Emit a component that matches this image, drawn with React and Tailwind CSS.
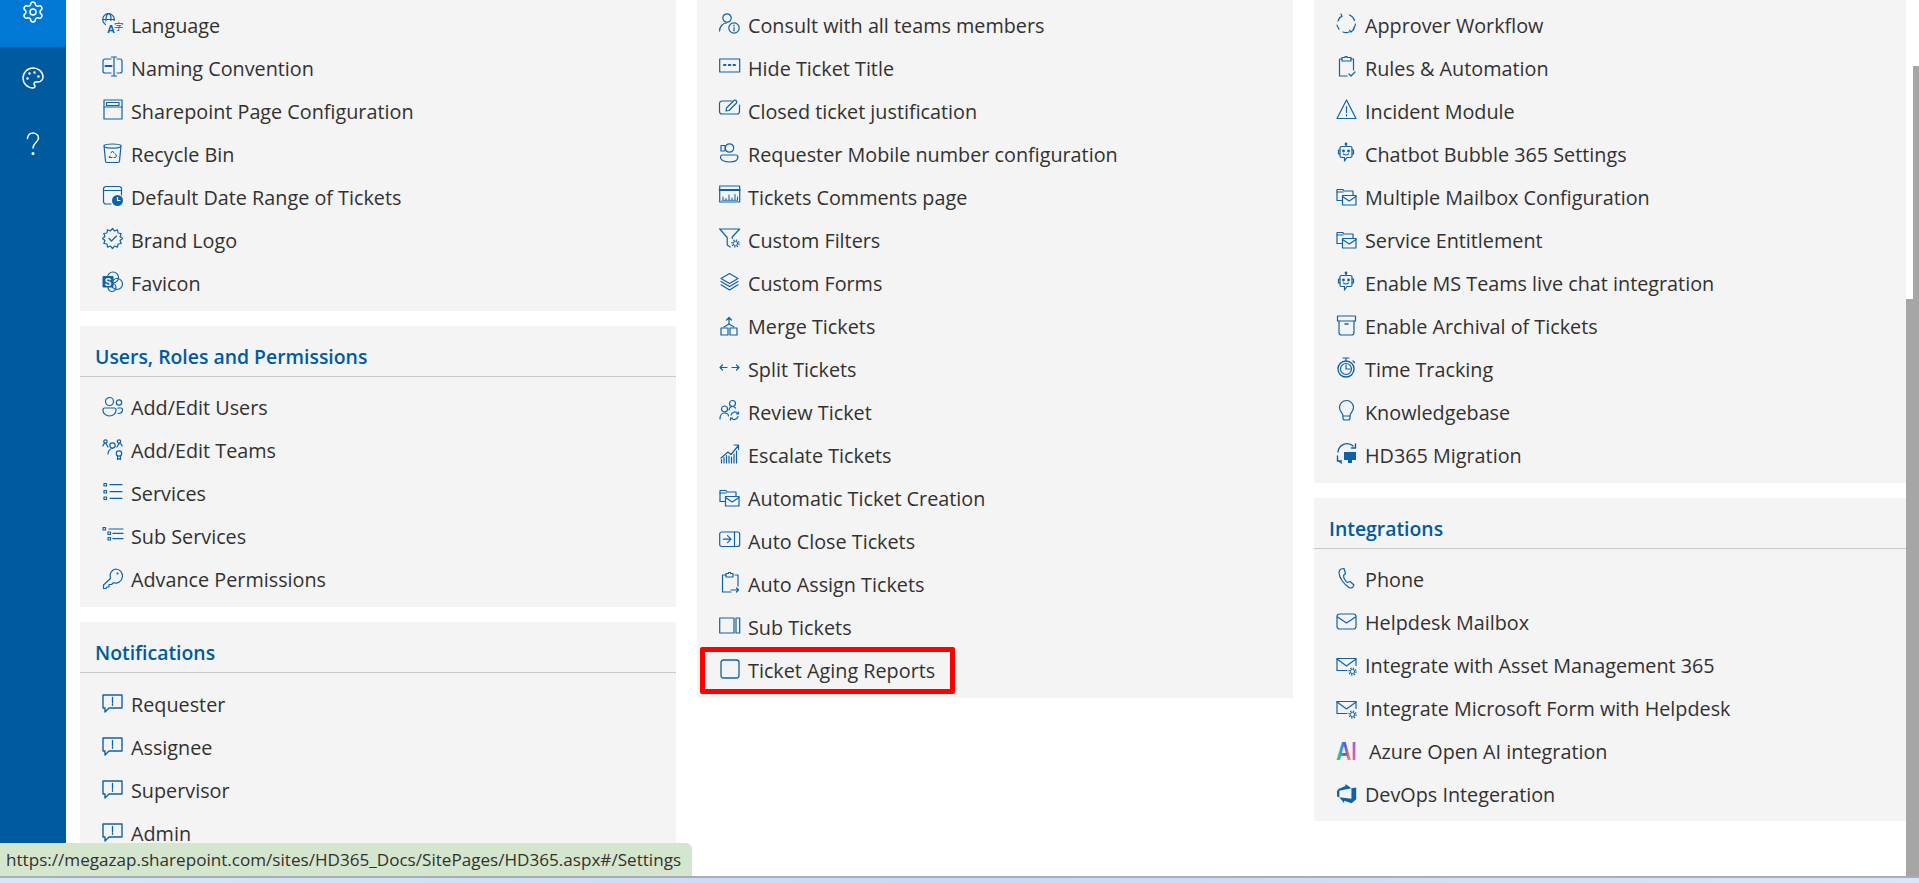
import React from 'react';
import { Settings, Palette } from 'lucide-react';

const fontStack = 'font-["Open_Sans","Noto_Sans",sans-serif]';

// scalloped badge outline, 12 bumps around the centre
const badgeOutline = Array.from({ length: 24 }, (_, i) => {
  const r = i % 2 === 0 ? 10 : 7.8;
  const a = (i * Math.PI) / 12;
  return `${(10.5 + r * Math.sin(a)).toFixed(2)} ${(10.5 - r * Math.cos(a)).toFixed(2)}`;
}).join(' L');

const smallGear = (cx, cy) => (
  <>
    <circle cx={cx} cy={cy} r="2.200" strokeWidth="1" />
    <circle cx={cx} cy={cy} r="3.500" strokeDasharray="1.300 1.450" strokeWidth="1.300" strokeLinecap="butt" />
  </>
);

const mailFolder = (
  <>
    <path d="M1 13V2.500h6l1 1.500h9v4" />
    <path d="M1 5h6" />
    <path d="M1 13.500h5" />
    <rect x="6.500" y="8.500" width="13.500" height="9.500" />
    <path d="M6.500 9.500l6.700 4.500 6.800-4.500" />
  </>
);

const bot = (
  <>
    <path d="M10 0.500v3" />
    <circle cx="10" cy="1" r="0.800" fill="currentColor" />
    <path d="M5.500 3.500h9a1.500 1.500 0 011.500 1.500v8a1.500 1.500 0 01-1.500 1.500H11l-2.500 3.500v-3.500H5.500A1.500 1.500 0 014 13V5a1.500 1.500 0 011.500-1.500z" />
    <path d="M4 7H2.500v4H4M16 7h1.500v4H16" />
    <circle cx="7.500" cy="8" r="0.800" fill="currentColor" />
    <circle cx="12.500" cy="8" r="0.800" fill="currentColor" />
    <path d="M7.500 11c1.500 1.200 3.500 1.200 5 0" />
  </>
);

const alertBubble = (
  <>
    <path d="M1 16V3h19v13H7l-4 4v-4z" strokeWidth="1.400" />
    <path d="M10.500 5.500v5M10.500 12v1.300" strokeWidth="1.300" />
  </>
);

const mailGear = (
  <>
    <path d="M1 13.500V2h19v7" />
    <path d="M1 2.500l9.500 7 9.500-7" />
    <path d="M1 14h10" />
    {smallGear(16.500, 15)}
  </>
);

const icons = {
  language: (
    <>
      <circle cx="6.500" cy="6.500" r="5.800" />
      <ellipse cx="6.500" cy="6.500" rx="2.500" ry="5.800" />
      <path d="M0.700 6.500h11.600" />
      <rect x="4" y="8" width="17" height="13" fill="#f4f4f4" stroke="none" />
      <text x="5" y="19.500" fontSize="11" fontWeight="600" fill="currentColor" stroke="none" fontFamily="Liberation Sans, sans-serif">A</text>
      <text x="12" y="17" fontSize="9.500" fill="currentColor" stroke="none" fontFamily="Noto Sans CJK SC, sans-serif">字</text>
    </>
  ),
  naming: (
    <>
      <path d="M9 3H3a2 2 0 00-2 2v10a2 2 0 002 2h6" />
      <path d="M15 3h3a2 2 0 012 2v10a2 2 0 01-2 2h-3" />
      <path d="M12 1v19M9.500 1h5M9.500 20h5" />
      <path d="M3.500 10h6" strokeWidth="2.200" />
    </>
  ),
  page: (
    <>
      <rect x="2" y="1" width="18" height="19" />
      <rect x="4.500" y="3.500" width="12.500" height="3" />
      <path d="M2 8h18" />
    </>
  ),
  recycle: (
    <>
      <path d="M2 3.500c2-2 15-2 17 0l-1.500 15.500a1.500 1.500 0 01-1.500 1.500H5a1.500 1.500 0 01-1.500-1.500z" />
      <path d="M2.500 5c3 1.500 13 1.500 16 0" />
      <path d="M9 11l1.500-2 1.500 2M13.500 12l1 2-1 1.500h-1.500M8 14l-1 1.500h3" strokeWidth="1" />
    </>
  ),
  dateClock: (
    <>
      <path d="M9 19H4a2.500 2.500 0 01-2.500-2.500V4A2.500 2.500 0 014 1.500h13A2.500 2.500 0 0119.500 4v6" />
      <path d="M1.500 5.500h18" />
      <circle cx="15.500" cy="15.500" r="5.500" fill="currentColor" stroke="none" />
      <path d="M15.500 12.500v3h2.500" stroke="#f4f4f4" strokeWidth="1.200" />
    </>
  ),
  badge: (
    <>
      <path d={`M${badgeOutline}Z`} />
      <path d="M7 10.500l2.500 2.500 5-5" />
    </>
  ),
  sharepoint: (
    <>
      <circle cx="11" cy="6.500" r="5.500" />
      <circle cx="15" cy="13" r="5.500" />
      <circle cx="10" cy="16.500" r="4" />
      <rect x="0.500" y="5" width="11" height="11.500" rx="1" fill="currentColor" stroke="none" />
      <text x="6" y="14.500" textAnchor="middle" fontSize="10" fontWeight="700" fill="#f4f4f4" stroke="none" fontFamily="Liberation Sans, sans-serif">S</text>
    </>
  ),
  users: (
    <>
      <circle cx="7.500" cy="5" r="4" />
      <circle cx="17" cy="6" r="2.700" />
      <path d="M1 13a1.500 1.500 0 011.500-1.500h10A1.500 1.500 0 0114 13v1c0 3-3 5.500-6.500 5.500S1 17 1 14z" />
      <path d="M16 11.500h3a1.500 1.500 0 011.500 1.500c0 2.500-1.500 4-4.500 4" />
    </>
  ),
  teams: (
    <>
      <circle cx="3.500" cy="2.500" r="1.700" />
      <circle cx="17" cy="2.500" r="1.700" />
      <circle cx="10.500" cy="6.500" r="2.700" />
      <path d="M1 7c0-1.500 1-2.500 2.500-2.500M6 8l-2-3.500M15 8l2-3.500M20 7c0-1.500-1-2.500-3-2.500" />
      <path d="M6 15c0-3 2-5.500 4.500-5.500" />
      <circle cx="17" cy="14.500" r="2.700" />
      <path d="M15.500 17v3.500l1.500-1 1.500 1V17" />
    </>
  ),
  services: (
    <>
      <rect x="2" y="1" width="2.500" height="2.500" />
      <rect x="2" y="8" width="2.500" height="2.500" />
      <rect x="2" y="14.500" width="2.500" height="2.500" />
      <path d="M8 2.200h12M8 9.200h12M8 15.800h12" />
    </>
  ),
  subServices: (
    <>
      <rect x="1" y="1" width="2.500" height="2.500" />
      <rect x="6" y="5.500" width="2.500" height="2.500" />
      <rect x="6" y="11" width="2.500" height="2.500" />
      <path d="M7 2.500h14M11 6.800h10M11 12.200h10" />
    </>
  ),
  key: (
    <>
      <path d="M13.500 1a7 7 0 11-2 13.700L9.500 16.500H7v2.500H5l-1 1.500H1.500v-3.500l7-6.500a7 7 0 015-9.500z" />
      <circle cx="15.500" cy="5.500" r="1.100" fill="currentColor" stroke="none" />
    </>
  ),
  alert: alertBubble,
  consult: (
    <>
      <circle cx="8" cy="5" r="4.200" />
      <path d="M0.500 18c0-4 3-8 7-8" />
      <circle cx="15" cy="15" r="5.200" />
      <path d="M15 14.500V18M15 12v1" />
    </>
  ),
  dots: (
    <>
      <rect x="0.700" y="1" width="20" height="13" />
      <path d="M5 7h1.500M9.800 7h1.500M14.500 7h1.500" strokeWidth="2" />
    </>
  ),
  edit: (
    <>
      <path d="M13 2H3a2.500 2.500 0 00-2.500 2.500v8A2.500 2.500 0 003 15h15a2.500 2.500 0 002.500-2.500V6" />
      <path d="M7 12l.5-3 7.500-7.500a1.800 1.800 0 012.500 2.500L10 11.500z" />
    </>
  ),
  mobileUser: (
    <>
      <circle cx="10.500" cy="5" r="4.200" />
      <rect x="2" y="2.500" width="4" height="5.500" fill="#f4f4f4" />
      <path d="M3 12h14a2 2 0 012 2c0 3.500-4 5-8.500 5S1.500 17.500 1.500 14A2 2 0 013 12z" />
    </>
  ),
  chartPage: (
    <>
      <rect x="0.700" y="1" width="20" height="16" />
      <path d="M0.700 5h20" strokeWidth="2" />
      <path d="M4 15v-3M7 15v-1.500M10 15V10M13 15v-2M16 15V9.500M18.500 15v-3" strokeWidth="1" />
      <path d="M3 15.300h15.500" strokeWidth="0.800" />
    </>
  ),
  filterGear: (
    <>
      <path d="M0.700 1h20l-7.500 8v1.500M0.700 1l7.500 8.500V17l3 2" />
      {smallGear(16.500, 15.500)}
    </>
  ),
  layers: (
    <>
      <path d="M10.500 1.500l8.500 5-8.500 5-8.500-5z" />
      <path d="M2 9.500l8.500 5 8.500-5" />
      <path d="M2 12.800l8.500 5.200 8.500-5.200" />
    </>
  ),
  merge: (
    <>
      <path d="M10 7V0.500M7.500 3L10 0.500 12.500 3" />
      <path d="M10 7l-5 3M10 7l5 3" />
      <rect x="2" y="11" width="7" height="7" />
      <rect x="11" y="11" width="7" height="7" />
    </>
  ),
  split: (
    <>
      <path d="M1 7h7M3.500 4.500L1 7l2.500 2.500" />
      <path d="M13 7h7M17.500 4.500L20 7l-2.500 2.500" />
    </>
  ),
  review: (
    <>
      <circle cx="13.500" cy="3.500" r="3" />
      <circle cx="5.500" cy="9" r="3" />
      <path d="M1 19c0-3 1.500-6 4.500-6s4 2 4 3" />
      <path d="M10 10c0-1.500 1.500-3.500 3.500-3.500 1 0 2 .5 3 1.500" />
      <path d="M12 15a4 4 0 017-1.500M19.500 12v2h-2M19 16.500a4 4 0 01-7 1.500M11.500 20v-2h2" />
    </>
  ),
  escalate: (
    <>
      <path d="M2 15L9 9l3 2.500 7-8.500M15 2h4.500v4.500" />
      <path d="M2.500 16.500v3.500M5 14.500V20M7.500 12.500V20M10 13v7M12.500 14v6M15 11v9M17.500 8v12" strokeWidth="1.200" />
    </>
  ),
  folderMail: mailFolder,
  autoClose: (
    <>
      <rect x="0.700" y="1" width="20" height="14.500" rx="2" />
      <path d="M15.500 1v14.500" />
      <path d="M4.500 8.200h7M8.500 4.700L12 8.200l-3.500 3.500" />
    </>
  ),
  clipboardArrow: (
    <>
      <path d="M7 3H3.500v17H12M16 3h3v11" />
      <path d="M7 1.500h2.500V0.500h2v1H14V5H7z" />
      <path d="M12 18h7.500M17.500 16l2 2-2 2" />
    </>
  ),
  panels: (
    <>
      <rect x="0.700" y="1" width="14.300" height="15" />
      <rect x="17" y="1" width="3.700" height="15" />
    </>
  ),
  square: <rect x="2" y="2" width="18" height="18" rx="2.500" strokeWidth="1.300" />,
  approver: (
    <>
      <path d="M6 3a8.500 8.500 0 00-4 5M5 1l1 2.500-2.500 1M13.500 2a8.500 8.500 0 015 5.500M19.500 11a8.500 8.500 0 01-2 4.500M13 19a8.500 8.500 0 01-6 0M3 16a8.500 8.500 0 01-2-4" />
      <path d="M13.500 17.500l1.500 1.500 3-3" />
    </>
  ),
  clipboardCheck: (
    <>
      <path d="M6 3H3.500v17H11M15 3h2.500v11" />
      <path d="M6 1.500h3V0.500h2v1h4V5H6z" />
      <path d="M13 18l2 2 4-4" />
    </>
  ),
  warning: (
    <>
      <path d="M10.500 1L20 19.500H1z" strokeLinejoin="round" />
      <path d="M10.500 7.500v6M10.500 15.500v1.500" />
    </>
  ),
  bot,
  archive: (
    <>
      <rect x="1.500" y="1" width="18" height="5" fill="none" />
      <path d="M3 6v11.500A2.500 2.500 0 005.500 20h10a2.500 2.500 0 002.500-2.500V6" />
      <path d="M9 9h3" strokeWidth="1.500" />
    </>
  ),
  timer: (
    <>
      <circle cx="10" cy="12" r="8" strokeWidth="1.400" />
      <circle cx="10" cy="12" r="5.500" />
      <path d="M10 8v4h4" />
      <path d="M7 1h6M10 1v3M17 4l1.500 1.500" />
    </>
  ),
  bulb: (
    <>
      <path d="M7 16c0-3-3.500-4.500-3.500-8.500a7 7 0 0114 0C17.500 11.500 14 13 14 16z" />
      <path d="M7 16v2a2 2 0 002 2h3a2 2 0 002-2v-2" />
    </>
  ),
  migration: (
    <>
      <path d="M2 9a9 9 0 0115-6M19.500 1v4h-4" strokeWidth="1.400" />
      <path d="M1.500 13v5h4M1.500 17l4 3" strokeWidth="1.400" />
      <rect x="8" y="9" width="12" height="8" fill="currentColor" stroke="none" />
      <rect x="12" y="17" width="4" height="3" fill="currentColor" stroke="none" />
    </>
  ),
  phone: (
    <path d="M5 1.500L8 1l1.500 5-2 2c0 2.500 2 6 4 7l2.500-1 4 3.500-1.500 2.500c-1 .5-2.500.5-3.500 0C8 17 3 10 3 5c0-1.500 1-3 2-3.500z" />
  ),
  mail: (
    <>
      <rect x="1" y="2" width="19" height="15" rx="2.500" />
      <path d="M1.500 5l9 6 9-6" />
    </>
  ),
  mailGear,
  azureAi: (
    <>
      <defs>
        <linearGradient id="aiLetterA" x1="0" y1="0" x2="1" y2="0">
          <stop offset="0" stopColor="#6cc24a" />
          <stop offset="0.35" stopColor="#1f9fe0" />
          <stop offset="0.6" stopColor="#6a4de0" />
          <stop offset="0.85" stopColor="#f08a3c" />
        </linearGradient>
        <linearGradient id="aiLetterI" x1="0" y1="0" x2="0" y2="1">
          <stop offset="0" stopColor="#8b5ce6" />
          <stop offset="1" stopColor="#f0609e" />
        </linearGradient>
      </defs>
      <text x="0" y="21" fontSize="26" fontWeight="700" fill="url(#aiLetterA)" stroke="none" textLength="15.500" lengthAdjust="spacingAndGlyphs" fontFamily="Liberation Sans, sans-serif">A</text>
      <text x="15.500" y="21" fontSize="26" fontWeight="700" fill="url(#aiLetterI)" stroke="none" textLength="5" lengthAdjust="spacingAndGlyphs" fontFamily="Liberation Sans, sans-serif">I</text>
    </>
  ),
  devops: (
    <path
      transform="translate(1 2) scale(0.800)"
      d="M0 8.877L2.247 5.910l8.405-3.416V.022l7.370 5.393L2.966 8.338v8.225L0 15.707zm24-4.450v14.651l-5.753 4.900-9.303-3.057v3.056l-5.978-7.416 15.057 1.798V5.415z"
      fill="currentColor"
      stroke="none"
    />
  ),
};

// how far each drawing sits below the top of its 21px box
const iconShift = {
  dots: 2,
  services: 1.500,
  subServices: 2.500,
  users: 1.500,
  teams: 1,
  key: 1,
  split: 3.500,
  merge: 3,
  layers: 1,
  mobileUser: 1,
  autoClose: 2,
  panels: 2,
  folderMail: 2,
  mailGear: 3.500,
  mail: 2,
  phone: 0.500,
  bot: 1,
  archive: 1,
};

const generalItems = [
  ['language', 'Language'],
  ['naming', 'Naming Convention'],
  ['page', 'Sharepoint Page Configuration'],
  ['recycle', 'Recycle Bin'],
  ['dateClock', 'Default Date Range of Tickets'],
  ['badge', 'Brand Logo'],
  ['sharepoint', 'Favicon'],
];

const userItems = [
  ['users', 'Add/Edit Users'],
  ['teams', 'Add/Edit Teams'],
  ['services', 'Services'],
  ['subServices', 'Sub Services'],
  ['key', 'Advance Permissions'],
];

const notificationItems = [
  ['alert', 'Requester'],
  ['alert', 'Assignee'],
  ['alert', 'Supervisor'],
  ['alert', 'Admin'],
];

const ticketItems = [
  ['consult', 'Consult with all teams members'],
  ['dots', 'Hide Ticket Title'],
  ['edit', 'Closed ticket justification'],
  ['mobileUser', 'Requester Mobile number configuration'],
  ['chartPage', 'Tickets Comments page'],
  ['filterGear', 'Custom Filters'],
  ['layers', 'Custom Forms'],
  ['merge', 'Merge Tickets'],
  ['split', 'Split Tickets'],
  ['review', 'Review Ticket'],
  ['escalate', 'Escalate Tickets'],
  ['folderMail', 'Automatic Ticket Creation'],
  ['autoClose', 'Auto Close Tickets'],
  ['clipboardArrow', 'Auto Assign Tickets'],
  ['panels', 'Sub Tickets'],
];

const moduleItems = [
  ['approver', 'Approver Workflow'],
  ['clipboardCheck', 'Rules & Automation'],
  ['warning', 'Incident Module'],
  ['bot', 'Chatbot Bubble 365 Settings'],
  ['folderMail', 'Multiple Mailbox Configuration'],
  ['folderMail', 'Service Entitlement'],
  ['bot', 'Enable MS Teams live chat integration'],
  ['archive', 'Enable Archival of Tickets'],
  ['timer', 'Time Tracking'],
  ['bulb', 'Knowledgebase'],
  ['migration', 'HD365 Migration'],
];

const integrationItems = [
  ['phone', 'Phone'],
  ['mail', 'Helpdesk Mailbox'],
  ['mailGear', 'Integrate with Asset Management 365'],
  ['mailGear', 'Integrate Microsoft Form with Helpdesk'],
];

const Icon = ({ name }) => (
  <svg
    viewBox="0 0 21 21"
    className="w-[21px] h-[21px] shrink-0 -mt-[6px] text-[#0f62a6] overflow-visible"
    fill="none"
    stroke="currentColor"
    strokeWidth="1.200"
    strokeLinecap="round"
    strokeLinejoin="round"
  >
    <g transform={`translate(0 ${iconShift[name] || 0})`}>{icons[name]}</g>
  </svg>
);

const Row = ({ icon, label, gap = 'gap-2' }) => (
  <div className={`flex items-center h-[43px] pl-[22px] ${gap}`}>
    <Icon name={icon} />
    <span className="-translate-y-px text-[19.800px] leading-[43px] text-[#323130] whitespace-nowrap">{label}</span>
  </div>
);

const Card = ({ title, items, bodyClass = 'pt-[5px] pb-[5px]', children }) => (
  <section className="bg-[#f4f4f4]">
    {title && (
      <h2 className="h-[51px] pl-[15px] pt-[18px] border-b border-[#c8c8c8] text-[19.400px] leading-[26px] font-semibold text-[#005a9e]">
        {title}
      </h2>
    )}
    <div className={bodyClass}>
      {items.map(([icon, label]) => (
        <Row key={label} icon={icon} label={label} />
      ))}
      {children}
    </div>
  </section>
);

const App = () => {
  return (
    <div className={`relative flex h-[883px] w-[1919px] overflow-hidden bg-white ${fontStack}`}>
      <aside className="flex flex-col items-center w-[66px] shrink-0 bg-[#005a9e] text-white">
        <div className="flex justify-center w-full h-[47px] bg-[#0078d4] rounded-br-sm">
          <Settings className="w-6 h-6" strokeWidth={1.5} />
        </div>
        <Palette className="w-6 h-6 mt-[19px]" strokeWidth={1.5} />
        <svg viewBox="0 0 14 24" className="w-[14px] h-6 mt-[42px]" fill="none" stroke="currentColor" strokeWidth="1.500" strokeLinecap="round">
          <path d="M1.500 6.500C1.500 3.300 4 1 7 1s5.500 2.200 5.500 5c0 4.500-5.500 4.500-5.500 10" />
          <circle cx="7" cy="21.500" r="0.800" fill="currentColor" />
        </svg>
      </aside>

      <main className="grid grid-cols-[596px_596px_592px] gap-x-[21px] items-start pl-[14px]">
        <div className="flex flex-col gap-[15px]">
          <Card items={generalItems} />
          <Card title="Users, Roles and Permissions" items={userItems} bodyClass="pt-[10px] pb-[5px]" />
          <Card title="Notifications" items={notificationItems} bodyClass="pt-[11px] pb-[5px]" />
        </div>

        <Card items={ticketItems}>
          <div className="relative">
            <Row icon="square" label="Ticket Aging Reports" />
            <div className="absolute left-[3px] top-[-3px] w-[255px] h-[47px] border-[5px] border-[#ff0000] rounded-[2px]" />
          </div>
        </Card>

        <div className="flex flex-col gap-[15px]">
          <Card items={moduleItems} />
          <Card title="Integrations" items={integrationItems} bodyClass="pt-[10px] pb-[4px]">
            <Row icon="azureAi" label="Azure Open AI integration" gap="gap-3" />
            <Row icon="devops" label="DevOps Integeration" />
          </Card>
        </div>
      </main>

      {/* browser scrollbars, hover status and the desktop strip under the window */}
      <div className="absolute right-0 top-[66px] w-[6px] h-[233px] bg-[#a6a6a6]" />
      <div className="absolute right-0 top-[299px] w-[13px] h-[577px] bg-[#a6a6a6]" />
      <div className="absolute left-0 top-[843px] w-[692px] h-[33px] pl-[6px] bg-[#d5e6cf] rounded-tr-[6px] text-[17.100px] leading-[33px] text-[#323130] whitespace-nowrap">
        https://megazap.sharepoint.com/sites/HD365_Docs/SitePages/HD365.aspx#/Settings
      </div>
      <div className="absolute left-0 right-0 top-[876px] h-[7px] border-t-2 border-[#a9adb8] bg-gradient-to-r from-[#d9e6f7] via-[#c9d9f3] to-[#dbe6f7]" />
    </div>
  );
};

export default App;
